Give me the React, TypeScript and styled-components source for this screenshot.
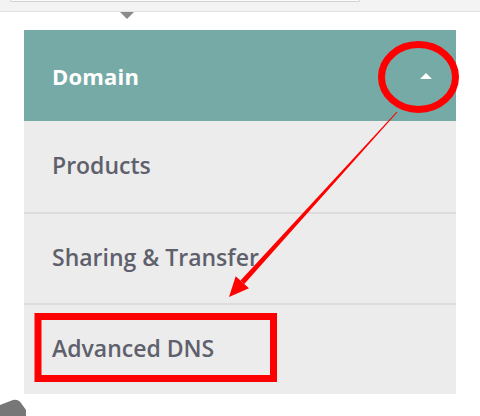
import styled, { createGlobalStyle } from "styled-components";

const GlobalStyle = createGlobalStyle`
  html, body {
    margin: 0;
    padding: 0;
    background: #ffffff;
  }
  body {
    font-family: "Open Sans", "Liberation Sans", sans-serif;
  }
`;

const Page = styled.div`
  position: relative;
  width: 480px;
  height: 416px;
  overflow: hidden;
  background: #ffffff;
`;

const TopStrip = styled.div`
  position: relative;
  height: 11px;
  background: #f3f3f3;
  border-bottom: 1px solid #e2e2e2;
`;

const SearchBox = styled.div`
  width: 348px;
  height: 1px;
  margin-left: 10px;
  background: #fafafa;
  border: 1px solid #d2d2d2;
  border-top: none;
  border-radius: 0 0 4px 4px;
`;

const Pointer = styled.div`
  position: absolute;
  left: 120px;
  top: 12px;
  width: 0;
  height: 0;
  border-left: 7px solid transparent;
  border-right: 7px solid transparent;
  border-top: 7px solid #8a8a8a;
`;

const Panel = styled.div`
  margin: 18px 24px 0 24px;
  background: #ececec;
`;

const Header = styled.div`
  display: flex;
  align-items: center;
  justify-content: space-between;
  height: 91px;
  padding: 0 24px 0 28px;
  background: #76aaa6;
`;

const HeaderTitle = styled.span`
  color: #ffffff;
  font-size: 22px;
  font-weight: 700;
  letter-spacing: 0.2px;
`;

const Caret = styled.span`
  width: 0;
  height: 0;
  border-left: 6px solid transparent;
  border-right: 6px solid transparent;
  border-bottom: 6px solid #ffffff;
`;

const Item = styled.div<{ $first?: boolean }>`
  display: flex;
  align-items: center;
  box-sizing: border-box;
  height: 91px;
  padding: 0 0 3px 28px;
  border-top: ${(p) => (p.$first ? "none" : "2px solid #dcdcdc")};
  color: #5e606b;
  font-size: 23px;
  font-weight: 600;
`;

const Overlay = styled.svg`
  position: absolute;
  left: 0;
  top: 0;
  pointer-events: none;
`;

const items = ["Products", "Sharing & Transfer", "Advanced DNS"];

export default function App() {
  return (
    <Page>
      <GlobalStyle />
      <TopStrip>
        <SearchBox />
        <Pointer />
      </TopStrip>
      <Panel>
        <Header>
          <HeaderTitle>Domain</HeaderTitle>
          <Caret />
        </Header>
        {items.map((label, i) => (
          <Item key={label} $first={i === 0}>
            {label}
          </Item>
        ))}
      </Panel>
      <Overlay width="480" height="416" viewBox="0 0 480 416">
        <ellipse cx="418.5" cy="77" rx="37" ry="32.5" fill="none" stroke="#ff0000" strokeWidth="7" />
        <polygon points="397.4,112.3 396.6,111.7 240.5,280.5 244.3,283.9" fill="#ff0000" />
        <polygon points="229,297 235.7,276.2 249,288.2" fill="#ff0000" />
        <rect x="38" y="316.5" width="235.5" height="62" fill="none" stroke="#ff0000" strokeWidth="7" />
        <path d="M0 405 L13 400 Q18 399 21 403 L26 410 L26 416 L0 416 Z" fill="#777777" />
      </Overlay>
    </Page>
  );
}
